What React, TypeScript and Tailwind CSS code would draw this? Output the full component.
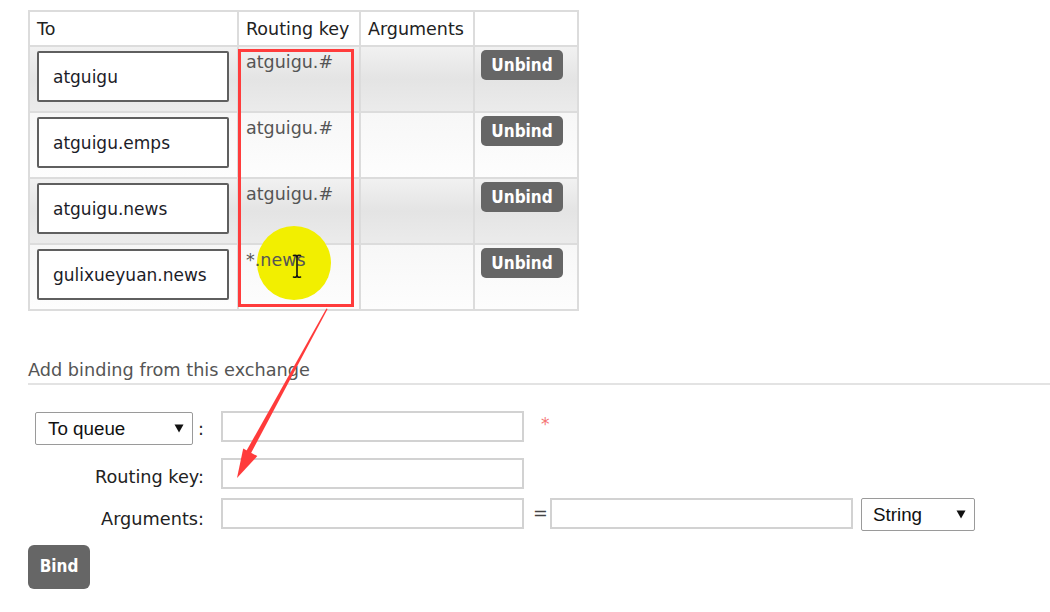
import React from "react";

const rows = [
  { to: "atguigu", key: "atguigu.#", odd: true },
  { to: "atguigu.emps", key: "atguigu.#", odd: false },
  { to: "atguigu.news", key: "atguigu.#", odd: true },
  { to: "gulixueyuan.news", key: "*.news", odd: false },
];

function Caret({ className = "" }: { className?: string }) {
  return (
    <svg width="10" height="9" viewBox="0 0 10 9" className={className}>
      <polygon points="0.5,0.5 9.5,0.5 5,8.5" fill="#111" />
    </svg>
  );
}

export default function App() {
  const cell = "border-r-2 border-b-2 border-[#dcdcdc]";
  const btnFont = "font-['DejaVu_Sans_Condensed','DejaVu_Sans',sans-serif] font-bold text-[17px]";
  return (
    <div className="relative w-[1050px] h-[612px] overflow-hidden bg-white font-['DejaVu_Sans',sans-serif]">
      {/* bindings table */}
      <div className="ml-[28px] mt-[10px] w-[551px] border-l-2 border-t-2 border-[#dcdcdc] grid grid-cols-[209px_122px_114px_104px] text-[17.5px] leading-[20px]">
        <div className={`${cell} h-[35px] flex items-center px-[7px] text-[#222]`}>To</div>
        <div className={`${cell} h-[35px] flex items-center px-[7px] text-[#222]`}>Routing key</div>
        <div className={`${cell} h-[35px] flex items-center px-[7px] text-[#222]`}>Arguments</div>
        <div className={`${cell} h-[35px]`}></div>
        {rows.map((r, i) => {
          const bg = r.odd
            ? "bg-gradient-to-b from-[#f1f1f1] via-[#e4e4e4] to-[#ebebeb]"
            : "bg-gradient-to-b from-[#f7f7f7] to-[#fdfdfd]";
          return (
            <React.Fragment key={i}>
              <div className={`${cell} ${bg} h-[66px] pt-[4px] pl-[7px]`}>
                <div className="w-[192px] h-[51px] border-2 border-[#5f5f5f] rounded-[2px] bg-white flex items-center pl-[14px] text-[#1c1c28] text-[17px]">
                  {r.to}
                </div>
              </div>
              <div className={`${cell} ${bg} h-[66px] pt-[5px] pl-[7px] text-[#555]`}>
                <span className="relative z-10">{r.key}</span>
              </div>
              <div className={`${cell} ${bg} h-[66px]`}></div>
              <div className={`${cell} ${bg} h-[66px] pt-[3px] pl-[6px]`}>
                <div className={`w-[82px] h-[30px] rounded-[5px] bg-[#666] text-white ${btnFont} flex items-center justify-center`}>
                  Unbind
                </div>
              </div>
            </React.Fragment>
          );
        })}
      </div>

      {/* add binding section */}
      <div className="ml-[28px] mt-[49px]">
        <div className="text-[17.7px] leading-[20px] text-[#555] pb-[3px] border-b-2 border-[#e3e3e3]">
          Add binding from this exchange
        </div>

        <div className="mt-[26px] h-[47px] flex items-start text-[17.7px] leading-[20px] text-[#222]">
          <div className="w-[176px] flex items-start">
            <div className="ml-[7px] mt-[1px] w-[160px] h-[33px] border border-[#9a9a9a] rounded-[2px] bg-white flex items-center justify-between pl-[12px] pr-[8px] font-['Liberation_Sans',sans-serif] text-[18.8px] text-[#111]">
              <span>To queue</span>
              <Caret />
            </div>
            <span className="ml-[5px] mt-[8px]">:</span>
          </div>
          <div className="ml-[17px] w-[303px] h-[31px] border-2 border-[#d2d2d2] bg-white"></div>
          <span className="ml-[17px] mt-[3px] text-[#f47474] text-[17px]">*</span>
        </div>

        <div className="h-[40px] flex items-start text-[17.7px] leading-[20px] text-[#222]">
          <div className="w-[176px] flex justify-end pt-[9px]">Routing key:</div>
          <div className="ml-[17px] w-[303px] h-[31px] border-2 border-[#d2d2d2] bg-white"></div>
        </div>

        <div className="h-[47px] flex items-start text-[17.7px] leading-[20px] text-[#222]">
          <div className="w-[176px] flex justify-end pt-[11px]">Arguments:</div>
          <div className="ml-[17px] w-[303px] h-[31px] border-2 border-[#d2d2d2] bg-white"></div>
          <span className="ml-[9px] mt-[5px] w-[17px] text-[#444]">=</span>
          <div className="w-[303px] h-[31px] border-2 border-[#d2d2d2] bg-white"></div>
          <div className="ml-[8px] w-[114px] h-[33px] border border-[#9a9a9a] rounded-[2px] bg-white flex items-center justify-between pl-[11px] pr-[8px] font-['Liberation_Sans',sans-serif] text-[18.8px] text-[#111]">
            <span>String</span>
            <Caret />
          </div>
        </div>

        <div className={`w-[62px] h-[44px] rounded-[6px] bg-[#666] text-white ${btnFont} flex items-center justify-center`}>
          Bind
        </div>
      </div>

      {/* annotations overlay */}
      <div className="absolute left-[257px] top-[226px] w-[74px] h-[74px] rounded-full bg-[#f2ef00]"></div>
      <div className="absolute left-[238px] top-[49px] w-[116px] h-[258px] border-[3px] border-[#ff3c3c]"></div>
      <svg className="absolute left-0 top-0 pointer-events-none z-20" width="1050" height="612" viewBox="0 0 1050 612">
        {/* I-beam cursor */}
        <g stroke="#111" strokeWidth="1.6" fill="none" strokeLinecap="round">
          <path d="M293.5 255.5 Q297 254.5 297 257.5 Q297 254.5 300.5 255.5" />
          <path d="M297 257.5 V275" />
          <path d="M293.5 277 Q297 278 297 275 Q297 278 300.5 277" />
        </g>
        {/* red arrow */}
        <polygon points="327.6,309 326.4,308.4 246.2,451.3 250.7,453.8" fill="#ff3b3b" />
        <polygon points="237,478 243.2,448.5 257.3,456.1" fill="#ff3b3b" />
      </svg>
    </div>
  );
}
